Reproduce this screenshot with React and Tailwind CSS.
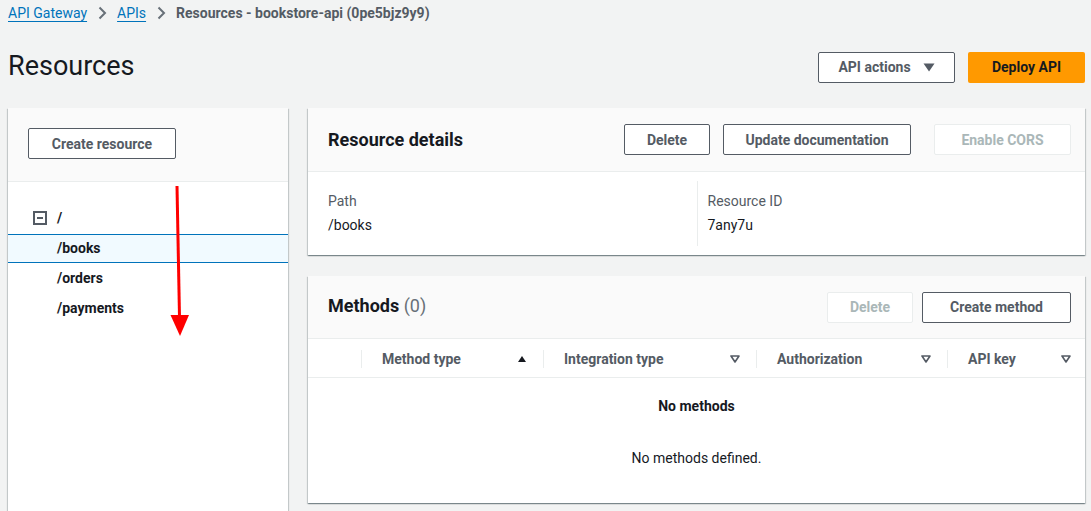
const font = { fontFamily: "Roboto, 'Liberation Sans', sans-serif" };

const Btn = ({ children, disabled, className = "" }) => (
  <button
    className={
      "h-[31px] px-5 border rounded-[2px] bg-white text-[14px] font-bold leading-none " +
      (disabled ? "border-[#eaeded] text-[#aab7b8] " : "border-[#545b64] text-[#545b64] ") +
      className
    }
  >
    {children}
  </button>
);

const Chevron = () => (
  <svg width="16" height="16" viewBox="0 0 16 16" className="mx-[7px]">
    <path d="M5.5 2.5 L11 8 L5.5 13.5" fill="none" stroke="#687078" strokeWidth="2" />
  </svg>
);

const SortDown = () => (
  <svg width="10" height="8" viewBox="0 0 10 8">
    <path d="M1 1 H9 L5 7 Z" fill="none" stroke="#545b64" strokeWidth="1.6" strokeLinejoin="round" />
  </svg>
);

const SortUp = () => (
  <svg width="10" height="8" viewBox="0 0 10 8">
    <path d="M1 7 H9 L5 1 Z" fill="#16191f" />
  </svg>
);

const TreeRow = ({ label, selected }) => (
  <div
    className={
      "flex items-center pl-[49px] text-[14px] font-bold text-[#16191f] " +
      (selected ? "h-[29px] bg-[#f1faff] border-y border-[#0073bb]" : "h-[30px]")
    }
  >
    {label}
  </div>
);

const Col = ({ label, icon, w, divider = true }) => (
  <div className="flex items-center h-full" style={{ width: w }}>
    {divider && <div className="w-px h-[18px] bg-[#eaeded]" />}
    <div className="flex-1 flex items-center justify-between pl-5 pr-4">
      <span className="text-[14px] font-bold text-[#545b64]">{label}</span>
      {icon}
    </div>
  </div>
);

const cardShadow =
  "shadow-[0_1px_1px_0_rgba(0,28,36,0.3),1px_1px_1px_0_rgba(0,28,36,0.15),-1px_1px_1px_0_rgba(0,28,36,0.15)]";

export default function App() {
  return (
    <div style={font} className="bg-[#f2f3f3] h-[511px] overflow-hidden pl-2 pr-[6px] text-[#16191f]">
      {/* breadcrumb */}
      <div className="pt-[3px] h-[23px] flex items-center text-[14px]">
        <a className="text-[#0073bb] underline underline-offset-[3px]">API Gateway</a>
        <Chevron />
        <a className="text-[#0073bb] underline underline-offset-[3px]">APIs</a>
        <Chevron />
        <span className="font-bold text-[#545b64]">Resources - bookstore-api (0pe5bjz9y9)</span>
      </div>

      {/* title row */}
      <div className="mt-[29px] h-[31px] flex items-center justify-between">
        <h1 className="text-[27px] leading-none font-normal text-[#16191f] -mt-[2px]">Resources</h1>
        <div className="flex gap-[13px]">
          <button className="h-[31px] w-[137px] border border-[#545b64] rounded-[2px] bg-white text-[14px] font-bold text-[#545b64] flex items-center justify-center gap-3">
            API actions
            <svg width="12" height="9" viewBox="0 0 12 9">
              <path d="M0.5 0.5 H11.5 L6 8.5 Z" fill="#545b64" />
            </svg>
          </button>
          <button className="h-[31px] w-[117px] rounded-[2px] bg-[#ff9900] text-[14px] font-bold text-[#16191f]">
            Deploy API
          </button>
        </div>
      </div>

      <div className="mt-[25px] flex gap-5">
        {/* left panel */}
        <div className={"relative w-[280px] h-[420px] bg-white " + cardShadow}>
          <div className="h-[74px] bg-[#fafafa] border-b border-[#eaeded] pl-5 pt-5">
            <Btn className="w-[148px] px-0">Create resource</Btn>
          </div>
          <div className="pt-5">
            <div className="h-[32px] flex items-center pl-[25px] text-[14px] font-bold">
              <svg width="14" height="14" viewBox="0 0 14 14" className="mr-[10px]">
                <rect x="1" y="1" width="12" height="12" fill="none" stroke="#545b64" strokeWidth="2" />
                <path d="M4 7 H10" stroke="#545b64" strokeWidth="2" />
              </svg>
              /
            </div>
            <TreeRow label="/books" selected />
            <TreeRow label="/orders" />
            <TreeRow label="/payments" />
          </div>
          {/* annotation arrow */}
          <svg className="absolute left-[152px] top-[77px]" width="40" height="155" viewBox="0 0 40 155">
            <path d="M17 1 L19.5 132" stroke="#ff0000" strokeWidth="3" />
            <path d="M10.5 130 L29 130 L20 151 Z" fill="#ff0000" />
          </svg>
        </div>

        {/* right column */}
        <div className="flex-1 flex flex-col gap-[21px]">
          {/* Resource details */}
          <div className={"bg-white " + cardShadow}>
            <div className="h-[64px] bg-[#fafafa] border-b border-[#eaeded] pl-5 pr-[14px] flex items-center justify-between">
              <h2 className="text-[18px] font-bold">Resource details</h2>
              <div className="flex items-center">
                <Btn className="w-[86px] px-0">Delete</Btn>
                <Btn className="ml-[13px] w-[188px] px-0">Update documentation</Btn>
                <Btn disabled className="ml-[23px] w-[137px] px-0">Enable CORS</Btn>
              </div>
            </div>
            <div className="grid grid-cols-2 h-[83px] items-center">
              <div className="pl-5 text-[14px] leading-6 -mt-[2px]">
                <div className="text-[#545b64]">Path</div>
                <div>/books</div>
              </div>
              <div className="border-l border-[#eaeded] h-[65px] flex flex-col justify-center pl-[10px] text-[14px] leading-6">
                <div className="-mt-[2px] text-[#545b64]">Resource ID</div>
                <div>7any7u</div>
              </div>
            </div>
          </div>

          {/* Methods */}
          <div className={"h-[227px] bg-white " + cardShadow}>
            <div className="h-[63px] bg-[#fafafa] border-b border-[#eaeded] pl-5 pr-[14px] flex items-center justify-between">
              <h2 className="text-[18px] font-bold -mt-[3px]">
                Methods <span className="font-normal text-[#687078]">(0)</span>
              </h2>
              <div className="flex items-center gap-[9px]">
                <Btn disabled className="w-[86px] px-0">Delete</Btn>
                <Btn className="w-[149px] px-0">Create method</Btn>
              </div>
            </div>
            <div className="h-[39px] border-b border-[#eaeded] flex items-center pt-[2px]">
              <div className="w-[53px]" />
              <Col label="Method type" icon={<SortUp />} w={182} />
              <Col label="Integration type" icon={<SortDown />} w={213} />
              <Col label="Authorization" icon={<SortDown />} w={191} />
              <div className="flex-1 h-full flex items-center">
                <div className="w-px h-[18px] bg-[#eaeded]" />
                <div className="flex-1 flex items-center justify-between pl-5 pr-[14px]">
                  <span className="text-[14px] font-bold text-[#545b64]">API key</span>
                  <SortDown />
                </div>
              </div>
            </div>
            <div className="flex flex-col items-center text-[14px]">
              <div className="mt-[18px] font-bold">No methods</div>
              <div className="mt-[31px]">No methods defined.</div>
            </div>
          </div>
        </div>
      </div>
    </div>
  );
}
